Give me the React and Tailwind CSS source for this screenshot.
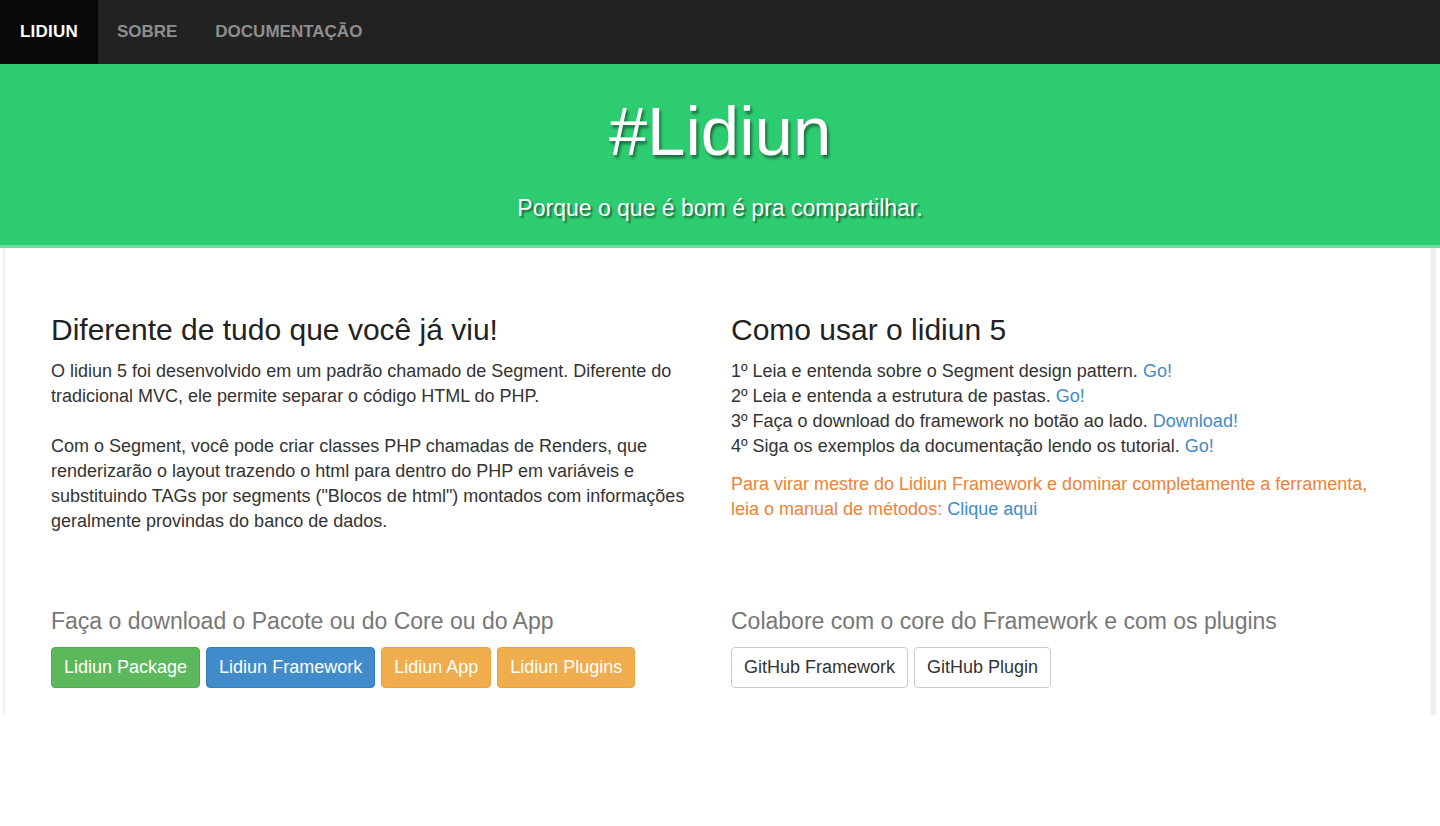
import React from 'react';

const font = { fontFamily: '"Liberation Sans", Arial, Helvetica, sans-serif' };

const NavBar = () => (
  <nav className="h-16 bg-[#222222] flex items-stretch">
    <a className="flex items-center px-[20px] bg-[#080808] text-white font-bold text-[17px] tracking-[0.2px]">
      LIDIUN
    </a>
    <a className="flex items-center px-[19px] text-[#8e8e8e] font-bold text-[17px]">SOBRE</a>
    <a className="flex items-center px-[19px] text-[#8e8e8e] font-bold text-[17px]">DOCUMENTAÇÃO</a>
  </nav>
);

const Hero = () => (
  <header className="h-[184px] bg-[#2ecc71] border-b-[3px] border-[#6fdb9c] flex flex-col items-center text-white">
    <h1 className="mt-[28px] text-[69px] leading-[80px] [text-shadow:2px_3px_3px_rgba(0,0,0,0.45)]">#Lidiun</h1>
    <p className="mt-[22px] text-[23px] leading-[28px] [text-shadow:2px_2px_2px_rgba(0,0,0,0.5)]">
      Porque o que é bom é pra compartilhar.
    </p>
  </header>
);

const Link = ({ children }) => <a className="text-[#428bca]">{children}</a>;

const Button = ({ className, children }) => (
  <button className={`h-[41px] px-[12px] rounded-[4px] border text-[18px] ${className}`}>{children}</button>
);

const App = () => {
  const steps = [
    ['1º Leia e entenda sobre o Segment design pattern. ', 'Go!'],
    ['2º Leia e entenda a estrutura de pastas. ', 'Go!'],
    ['3º Faça o download do framework no botão ao lado. ', 'Download!'],
    ['4º Siga os exemplos da documentação lendo os tutorial. ', 'Go!'],
  ];

  return (
    <div className="min-h-[826px] bg-white text-[#333]" style={font}>
      <NavBar />
      <Hero />
      <main className="mx-[3px] mr-[4px] h-[467px] border-l-2 border-r-[6px] border-[#f0f0f0] px-[46px] pt-[66px]">
        <div className="grid grid-cols-[650px_650px] gap-x-[30px]">
          <section>
            <h3 className="text-[30px] leading-[32px] text-[#222]">Diferente de tudo que você já viu!</h3>
            <p className="mt-[13px] text-[18px] leading-[25px]">
              O lidiun 5 foi desenvolvido em um padrão chamado de Segment. Diferente do tradicional MVC, ele
              permite separar o código HTML do PHP.
              <br />
              <br />
              Com o Segment, você pode criar classes PHP chamadas de Renders, que renderizarão o layout trazendo
              o html para dentro do PHP em variáveis e substituindo TAGs por segments ("Blocos de html")
              montados com informações geralmente provindas do banco de dados.
            </p>
          </section>
          <section>
            <h3 className="text-[30px] leading-[32px] text-[#222]">Como usar o lidiun 5</h3>
            <ul className="mt-[13px] text-[18px] leading-[25px]">
              {steps.map(([text, link]) => (
                <li key={text}>
                  {text}
                  <Link>{link}</Link>
                </li>
              ))}
            </ul>
            <p className="mt-[13px] text-[18px] leading-[25px] text-[#ee8238]">
              Para virar mestre do Lidiun Framework e dominar completamente a ferramenta, leia o manual de
              métodos: <Link>Clique aqui</Link>
            </p>
          </section>
        </div>

        <div className="mt-[74px] grid grid-cols-[650px_650px] gap-x-[30px]">
          <section>
            <h4 className="text-[23px] leading-[26px] text-[#777]">Faça o download o Pacote ou do Core ou do App</h4>
            <div className="mt-[13px] flex gap-[6px]">
              <Button className="bg-[#5cb85c] border-[#4cae4c] text-white">Lidiun Package</Button>
              <Button className="bg-[#428bca] border-[#357ebd] text-white">Lidiun Framework</Button>
              <Button className="bg-[#f0ad4e] border-[#eea236] text-white">Lidiun App</Button>
              <Button className="bg-[#f0ad4e] border-[#eea236] text-white">Lidiun Plugins</Button>
            </div>
          </section>
          <section>
            <h4 className="text-[23px] leading-[26px] text-[#777]">Colabore com o core do Framework e com os plugins</h4>
            <div className="mt-[13px] flex gap-[6px]">
              <Button className="bg-white border-[#cccccc] text-[#333]">GitHub Framework</Button>
              <Button className="bg-white border-[#cccccc] text-[#333]">GitHub Plugin</Button>
            </div>
          </section>
        </div>
      </main>
    </div>
  );
};

export default App;
